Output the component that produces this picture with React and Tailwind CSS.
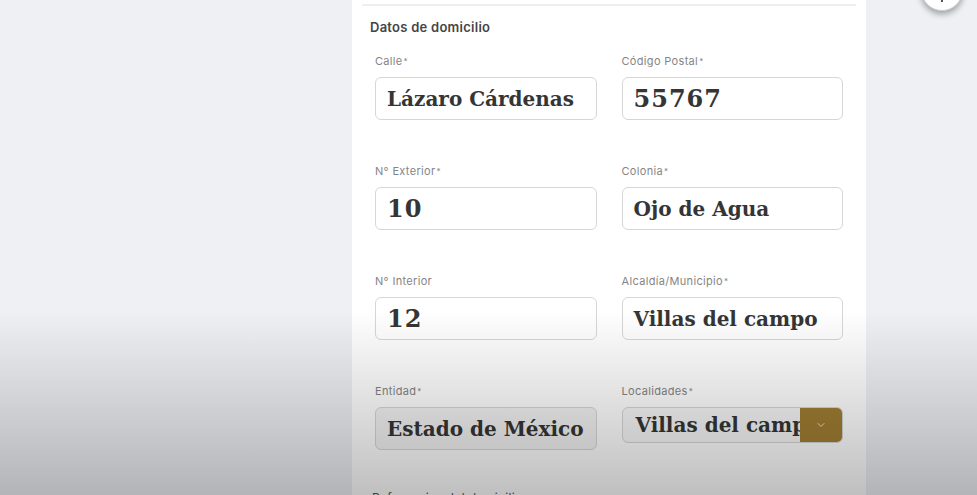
import React from 'react';
import { ChevronDown } from 'lucide-react';

const rows = [
  [
    { label: 'Calle', required: true, value: 'Lázaro Cárdenas' },
    { label: 'Código Postal', required: true, value: '55767', numeric: true },
  ],
  [
    { label: 'N° Exterior', required: true, value: '10', numeric: true },
    { label: 'Colonia', required: true, value: 'Ojo de Agua' },
  ],
  [
    { label: 'N° Interior', required: false, value: '12', numeric: true },
    { label: 'Alcaldía/Municipio', required: true, value: 'Villas del campo' },
  ],
];

const sans = { fontFamily: 'Inter, "Open Sans", sans-serif' };
const serif = { fontFamily: '"DejaVu Serif", "Liberation Serif", serif' };

function Label({ text, required }) {
  return (
    <div className="h-4 text-[11px] leading-4 tracking-[0.03em] text-[#858585]" style={sans}>
      {text}
      {required && <span className="ml-px align-top text-[8px]">*</span>}
    </div>
  );
}

function Field({ label, required, value, disabled, numeric }) {
  return (
    <div className="flex flex-col">
      <Label text={label} required={required} />
      <div
        className={
          'mt-2 flex h-[43px] items-center overflow-hidden rounded-md border border-[#d6d6d6] pl-[11px] pr-2 ' +
          (disabled ? 'bg-[#f3f3f3]' : 'bg-white')
        }
      >
        <span
          className={
            'whitespace-nowrap font-bold text-[#353535] ' +
            (numeric ? 'text-[24px] tracking-[1px]' : 'text-[20px]')
          }
          style={serif}
        >
          {value}
        </span>
      </div>
    </div>
  );
}

function SelectField({ label, value }) {
  return (
    <div className="flex flex-col">
      <Label text={label} required />
      <div className="mt-2 flex h-9 overflow-hidden rounded-md border border-[#d6d6d6] bg-[#f7f7f7]">
        <span
          className="flex-1 overflow-hidden whitespace-nowrap pl-[13px] text-[20px] font-bold leading-[34px] text-[#353535]"
          style={serif}
        >
          {value}
        </span>
        <div className="flex w-[42px] shrink-0 items-center justify-center bg-[#a07e33]">
          <ChevronDown className="h-3 w-3 text-[#e9dcc0]" strokeWidth={2} />
        </div>
      </div>
    </div>
  );
}

export default function App() {
  return (
    <div className="relative h-[495px] w-[977px] overflow-hidden bg-[#eef0f4]">
      <div className="ml-[352px] h-full w-[514px] bg-white">
        <div className="mx-[10px] pt-1">
          <div className="h-[2px] bg-[#eeeff1]" />
        </div>
        <div className="mt-[13px] h-4 pl-[18px] text-[13px] font-semibold leading-4 tracking-[0.02em] text-[#454545]" style={sans}>
          Datos de domicilio
        </div>
        <div className="mt-[18px] flex flex-col gap-[43px] px-[23px]">
          {rows.map((row, i) => (
            <div key={i} className="grid grid-cols-2 gap-x-[25px]">
              {row.map((f) => (
                <Field key={f.label} {...f} />
              ))}
            </div>
          ))}
          <div className="grid grid-cols-2 items-start gap-x-[25px]">
            <Field label="Entidad" required value="Estado de México" disabled />
            <SelectField label="Localidades" value="Villas del campo" />
          </div>
        </div>
        <div className="mt-[40px] pl-[20px] text-[12px] leading-4 tracking-[0.03em] text-[#555]" style={sans}>
          Referencias del domicilio
        </div>
      </div>

      <div className="absolute left-[921px] top-[-31px] flex h-[42px] w-[42px] items-end justify-center rounded-full border border-[#d0d0d0] bg-white shadow-[0_3px_6px_rgba(0,0,0,0.35)]">
        <div className="mb-[8px] h-[3px] w-[2px] bg-[#555]" />
      </div>

      <div className="pointer-events-none absolute inset-x-0 bottom-0 h-[185px] bg-linear-to-b from-transparent to-black/25" />
    </div>
  );
}
